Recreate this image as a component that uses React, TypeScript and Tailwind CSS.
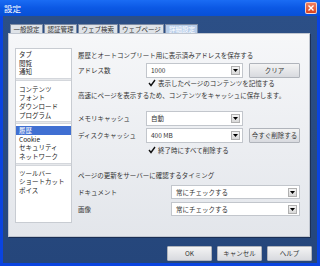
import React from "react";

const F = { fontFamily: '"Noto Sans CJK JP", "Noto Sans", sans-serif' };

function Arrow() {
  return (
    <div className="w-[9px] h-[9px] mr-[2px] bg-gradient-to-b from-[#f4f4f4] to-[#d8d8d8] border border-[#b0b0b0] flex items-center justify-center">
      <svg width="5" height="3" viewBox="0 0 5 3"><path d="M0 0h5L2.5 3z" fill="#000" /></svg>
    </div>
  );
}

function Select({ value, w, h = 15 }: { value: string; w: string; h?: number }) {
  return (
    <div className={`${w} ${h === 15 ? "h-[15px]" : "h-[14px]"} shrink-0 bg-white border border-[#c2c6cc] flex items-center justify-between pl-[4px]`}>
      <span className="text-[6.5px] leading-none text-[#333]">{value}</span>
      <Arrow />
    </div>
  );
}

function Btn({ label, w }: { label: string; w: string }) {
  return (
    <div className={`${w} h-[15px] shrink-0 border border-[#b0b4bb] rounded-[1px] bg-gradient-to-b from-[#f4f4f4] to-[#d8dadf] flex items-center justify-center text-[6.5px] leading-none text-[#333]`}>
      {label}
    </div>
  );
}

function Check({ label }: { label: string }) {
  return (
    <div className="flex items-center h-[10px] pl-[70px] gap-[2px]">
      <svg width="8" height="8" viewBox="0 0 8 8"><path d="M1 4l2 2.5L7 1" stroke="#111" strokeWidth="1.4" fill="none" /></svg>
      <span className="text-[6.5px] leading-none text-[#333]">{label}</span>
    </div>
  );
}

function Item({ t, sel }: { t: string; sel?: boolean }) {
  return (
    <div className={`h-[8.6px] shrink-0 pl-[3px] text-[6.5px] leading-[8.6px] ${sel ? "bg-[#3f6fd2] text-white" : "text-[#222]"}`}>{t}</div>
  );
}

function Sep() {
  return <div className="h-[3px] shrink-0 my-[2px] bg-[#e6e8eb] border-y border-[#d4d7dc]" />;
}

export default function App() {
  const tabs = ["一般設定", "認証管理", "ウェブ検索", "ウェブページ", "詳細設定"];
  return (
    <div style={F} className="w-[320px] h-[266px] bg-[#0a44e0] flex flex-col overflow-hidden">
      {/* title */}
      <div className="h-[16px] shrink-0 bg-gradient-to-b from-[#1a6cf4] via-[#0b58e4] to-[#0850d6] flex items-center justify-between pl-[4px] pr-[3px]">
        <span className="text-[8.5px] leading-none text-white">設定</span>
        <div className="w-[12px] h-[12px] rounded-[2px] bg-gradient-to-b from-[#f08060] to-[#d8401c] border border-white/70 flex items-center justify-center">
          <svg width="6" height="6" viewBox="0 0 6 6"><path d="M0.5 0.5l5 5M5.5 0.5l-5 5" stroke="#fff" strokeWidth="1.4" /></svg>
        </div>
      </div>
      {/* body */}
      <div className="flex-1 ml-[3px] mr-[3px] mb-[3px] bg-gradient-to-b from-[#2c4f86] to-[#25467b] flex flex-col pl-[5px] pr-[7px] pt-[8px]">
        {/* tabs */}
        <div className="flex h-[9px] shrink-0 pl-[2px] gap-[1px] items-end">
          {tabs.map((t, i) => (
            <div
              key={t}
              className={`h-[9px] px-[2.5px] border border-b-0 border-[#7c8ba4] text-[6.5px] leading-[8px] ${i === 4 ? "bg-[#b7cdea] text-white" : "bg-[#dfe3e8] text-[#333]"}`}
            >
              {t}
            </div>
          ))}
        </div>
        {/* panel */}
        <div className="h-[204px] shrink-0 bg-gradient-to-b from-[#f6f7f9] to-[#e3e6eb] border border-[#c0c6d0] shadow-[1px_1px_0_#1a2f55] flex items-start pl-[6px] pt-[14px]">
          {/* list */}
          <div className="w-[57px] h-[175px] shrink-0 bg-white border border-[#c8ccd2] pt-[1px] flex flex-col overflow-hidden">
            <Item t="タブ" />
            <Item t="閲覧" />
            <Item t="通知" />
            <Sep />
            <div className="h-[2px] shrink-0" />
            <Item t="コンテンツ" />
            <Item t="フォント" />
            <Item t="ダウンロード" />
            <Item t="プログラム" />
            <Sep />
            <Item t="履歴" sel />
            <Item t="Cookie" />
            <Item t="セキュリティ" />
            <Item t="ネットワーク" />
            <Sep />
            <div className="h-[1px] shrink-0" />
            <Item t="ツールバー" />
            <Item t="ショートカット" />
            <Item t="ボイス" />
          </div>
          {/* right */}
          <div className="flex-1 pl-[6px] flex flex-col text-[6.5px] leading-none text-[#333]">
            <div className="h-[10px] flex items-center mt-[2px]">履歴とオートコンプリート用に表示済みアドレスを保存する</div>
            <div className="h-[15px] mt-[3px] flex items-center">
              <span className="w-[68px]">アドレス数</span>
              <Select value="1000" w="w-[97px]" />
              <div className="ml-[6px]"><Btn label="クリア" w="w-[51px]" /></div>
            </div>
            <Check label="表示したページのコンテンツを記憶する" />
            <div className="h-[10px] mt-[2px] flex items-center">高速にページを表示するため、コンテンツをキャッシュに保存します。</div>
            <div className="h-[15px] mt-[11px] flex items-center">
              <span className="w-[68px]">メモリキャッシュ</span>
              <Select value="自動" w="w-[97px]" />
            </div>
            <div className="h-[15px] mt-[2px] flex items-center">
              <span className="w-[68px]">ディスクキャッシュ</span>
              <Select value="400 MB" w="w-[97px]" />
              <div className="ml-[6px]"><Btn label="今すぐ削除する" w="w-[51px]" /></div>
            </div>
            <div className="mt-[2px]"><Check label="終了時にすべて削除する" /></div>
            <div className="h-[10px] mt-[15px] flex items-center">ページの更新をサーバーに確認するタイミング</div>
            <div className="h-[14px] mt-[5px] flex items-center">
              <span className="w-[93px]">ドキュメント</span>
              <Select value="常にチェックする" w="w-[129px]" h={14} />
            </div>
            <div className="h-[14px] mt-[3px] flex items-center">
              <span className="w-[93px]">画像</span>
              <Select value="常にチェックする" w="w-[129px]" h={14} />
            </div>
          </div>
        </div>
        {/* buttons */}
        <div className="flex justify-end gap-[5px] mt-[9px] mr-[-2px]">
          <Btn label="OK" w="w-[45px]" />
          <Btn label="キャンセル" w="w-[45px]" />
          <Btn label="ヘルプ" w="w-[45px]" />
        </div>
      </div>
    </div>
  );
}
